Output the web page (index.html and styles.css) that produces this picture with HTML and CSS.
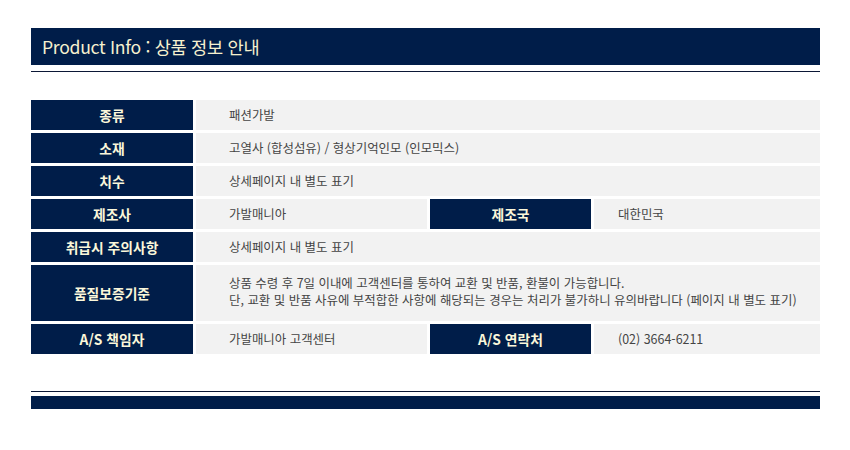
FILE: index.html
```html
<!DOCTYPE html>
<html lang="ko">
<head>
<meta charset="utf-8">
<title>Product Info</title>
<link rel="stylesheet" href="styles.css">
</head>
<body>
<div class="page">
  <div class="title-bar">Product Info : 상품 정보 안내</div>
  <div class="title-line"></div>

  <div class="info-grid">
    <div class="label">종류</div>
    <div class="value span3">패션가발</div>

    <div class="label">소재</div>
    <div class="value span3">고열사 (합성섬유) / 형상기억인모 (인모믹스)</div>

    <div class="label">치수</div>
    <div class="value span3">상세페이지 내 별도 표기</div>

    <div class="label">제조사</div>
    <div class="value">가발매니아</div>
    <div class="label">제조국</div>
    <div class="value right">대한민국</div>

    <div class="label">취급시 주의사항</div>
    <div class="value span3">상세페이지 내 별도 표기</div>

    <div class="label tall">품질보증기준</div>
    <div class="value span3 tall">상품 수령 후 7일 이내에 고객센터를 통하여 교환 및 반품, 환불이 가능합니다.<br>단, 교환 및 반품 사유에 부적합한 사항에 해당되는 경우는 처리가 불가하니 유의바랍니다 (페이지 내 별도 표기)</div>

    <div class="label">A/S 책임자</div>
    <div class="value">가발매니아 고객센터</div>
    <div class="label">A/S 연락처</div>
    <div class="value right">(02) 3664-6211</div>
  </div>

  <div class="foot-line"></div>
  <div class="foot-bar"></div>
</div>
</body>
</html>
```

FILE: styles.css
```css
html, body {
  margin: 0;
  padding: 0;
  background: #ffffff;
}

.page {
  width: 789px;
  padding: 28px 0 0 31px;
  font-family: "Noto Sans CJK KR", "Noto Sans", sans-serif;
}

.title-bar {
  height: 37px;
  background: #001d49;
  color: #f6f1cf;
  font-size: 17.6px;
  line-height: 37px;
  padding-left: 11px;
  letter-spacing: -0.3px;
}

.title-line {
  height: 1px;
  background: #0b1736;
  margin-top: 6px;
}

.info-grid {
  margin-top: 28px;
  display: grid;
  grid-template-columns: 162px 231px 161px 226px;
  gap: 3px;
}

.label {
  background: #001d49;
  color: #fbf7da;
  font-size: 13.8px;
  font-weight: 700;
  height: 30px;
  display: flex;
  align-items: center;
  justify-content: center;
}

.value {
  background: #f2f2f2;
  color: #444444;
  font-size: 12.45px;
  height: 30px;
  display: flex;
  align-items: center;
  padding-left: 33px;
  box-sizing: border-box;
}

.value.right {
  padding-left: 24px;
}

.value.tall {
  display: block;
  padding-top: 10px;
  line-height: 17px;
}

.tall {
  height: 56px;
}

.span3 {
  grid-column: span 3;
}

.foot-line {
  height: 1px;
  background: #0b1736;
  margin-top: 37px;
}

.foot-bar {
  height: 13px;
  background: #001d49;
  margin-top: 4px;
}
```
